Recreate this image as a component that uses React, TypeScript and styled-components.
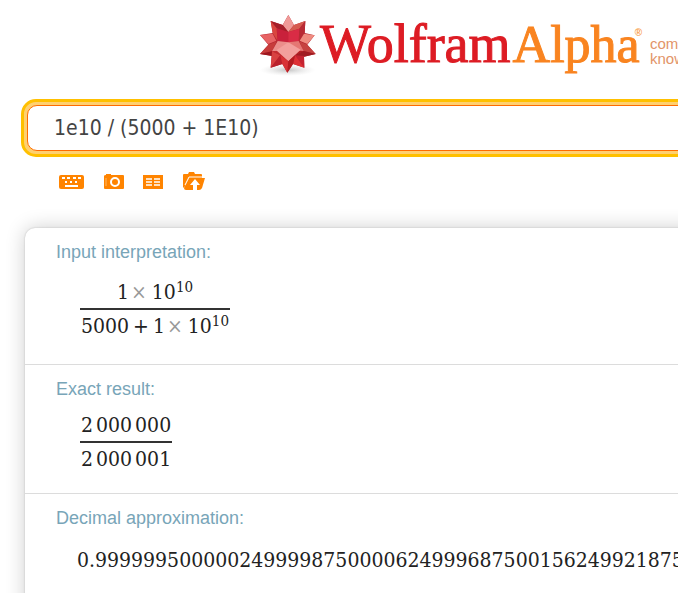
import React from "react";
import styled, { createGlobalStyle } from "styled-components";

const GlobalStyle = createGlobalStyle`
  *, *::before, *::after { box-sizing: border-box; }
  html, body { margin: 0; background: #fff; overflow: hidden; }
  body { font-family: "Liberation Sans", Arial, sans-serif; }
`;

const serifMath = `"DejaVu Serif Condensed", "DejaVu Serif", serif`;

const Page = styled.div`
  min-height: 100vh;
  overflow: hidden;
`;

const Header = styled.header`
  padding: 8px 0 0 256px;
`;

const Brand = styled.a`
  display: flex;
  align-items: flex-start;
  height: 91px;
  text-decoration: none;
  white-space: nowrap;
`;

const Star = styled.svg`
  flex: none;
  width: 64px;
  height: 72px;
`;

const Wordmark = styled.span`
  flex: none;
  width: 330px;
  font: 54px/72px "Liberation Serif", "Times New Roman", serif;
  color: #dd1c24;
  -webkit-text-stroke: 1px currentColor;
`;

const Alpha = styled.span`
  margin-left: 2px;
  font-size: 52px;
  color: #f98420;
`;

const Registered = styled.sup`
  margin-left: -5px;
  font: bold 10px/10px "Liberation Sans", Arial, sans-serif;
  vertical-align: 26px;
  color: #f9a04c;
  -webkit-text-stroke: 0;
`;

const Tagline = styled.span`
  flex: none;
  padding-top: 28px;
  font-size: 15px;
  line-height: 15px;
  color: #e29468;
`;

const SearchFrame = styled.form`
  margin: 0 -24px 0 21px;
  padding: 3px;
  border: 3px solid #ffc000;
  border-radius: 15px;
  background: #ffd070;
`;

const SearchInput = styled.input`
  display: block;
  width: 100%;
  height: 46px;
  padding: 0 26px;
  border: 1px solid #ff6c00;
  border-radius: 10px;
  outline: none;
  background: #fff;
  color: #444;
  font: 21px "DejaVu Sans Condensed", "DejaVu Sans", sans-serif;
`;

const Tools = styled.nav`
  display: flex;
  align-items: center;
  gap: 18px;
  height: 50px;
  padding-left: 58px;
`;

const ToolButton = styled.button`
  display: block;
  padding: 0;
  border: 0;
  background: none;
  color: #ff8400;
  svg { display: block; }
`;

const Results = styled.main`
  margin: 21px -24px 0 25px;
  padding-bottom: 24px;
  border-radius: 10px;
  background: #fff;
  box-shadow: 0 0 2px rgba(0, 0, 0, 0.2), 0 0 20px rgba(0, 0, 0, 0.2);
`;

const Pod = styled.section`
  padding: 13px 0 18px 31px;
  & + & { border-top: 1px solid #dcdcdc; }
`;

const PodTitle = styled.h2`
  margin: 0;
  font-size: 18px;
  font-weight: 400;
  line-height: 22px;
  color: #78a5b8;
`;

const Fraction = styled.div<{ $above: number; $below?: number }>`
  display: inline-flex;
  flex-direction: column;
  align-items: center;
  margin: ${(p) => p.$above}px 0 ${(p) => p.$below ?? 0}px 24px;
  color: #222;
  font: 21px/32px ${serifMath};
  white-space: nowrap;
`;

const Part = styled.div`
  padding: 0 1px;
  & + & {
    border-top: 2px solid #333;
  }
`;

const Times = styled.span`
  margin: 0 5px 0 2px;
  color: #999;
  font-size: 21px;
`;

const Power = styled.sup`
  font-size: 15px;
  line-height: 1px;
  vertical-align: 7px;
`;

const Group = styled.span`
  & + & { margin-left: 3px; }
`;

const Operator = styled.span`
  margin: 0 4px;
`;

const Decimal = styled.div`
  margin: 14px 0 0 21px;
  color: #222;
  font: 21px/34px ${serifMath};
  white-space: nowrap;
`;

const StarLogo = () => (
  <Star viewBox="18 9 192 216" aria-hidden="true">
    <defs>
      <radialGradient id="ground">
        <stop offset="0" stopColor="#aaa" stopOpacity=".7" />
        <stop offset="1" stopColor="#ddd" stopOpacity="0" />
      </radialGradient>
    </defs>
    <ellipse cx="113" cy="195" rx="84" ry="18" fill="url(#ground)" />
    <path d="M115 30 132 60 166 48 164 84 194 91 172 119 197 147 162 155 163 188 129 177 112 203 97 177 62 188 65 152 30 147 55 119 30 90 68 84 62 48 98 60Z" fill="#b52630" />
    <path d="M115 30 132 60 115 81 98 60Z" fill="#f09a98" />
    <path d="M62 48 98 60 115 81 80 70Z" fill="#a51f2a" />
    <path d="M62 48 80 70 83 108 68 84Z" fill="#d9463f" />
    <path d="M166 48 132 60 115 81 148 71Z" fill="#d65b50" />
    <path d="M166 48 148 71 146 108 164 84Z" fill="#b82b35" />
    <path d="M80 70 115 81 115 112 83 108Z" fill="#c9213b" />
    <path d="M148 71 115 81 115 112 146 108Z" fill="#d92c45" />
    <path d="M30 90 68 86 79 107 55 117Z" fill="#e76364" />
    <path d="M194 91 162 86 149 107 172 117Z" fill="#ef8c80" />
    <path d="M30 147 55 119 80 109 66 139Z" fill="#c73c3b" />
    <path d="M30 147 66 139 91 151 65 153Z" fill="#9e171e" />
    <path d="M197 147 172 119 148 109 161 138Z" fill="#c64340" />
    <path d="M197 147 161 138 135 151 162 155Z" fill="#a01c22" />
    <path d="M83 108 115 112 103 138 66 139Z" fill="#eb8e8b" />
    <path d="M146 108 115 112 127 138 161 138Z" fill="#e57773" />
    <path d="M66 139 103 136 111 167 91 151Z" fill="#c42c30" />
    <path d="M66 139 91 151 62 188Z" fill="#d84141" />
    <path d="M62 188 91 151 97 177Z" fill="#ba222d" />
    <path d="M161 138 127 136 116 167 135 151Z" fill="#b52024" />
    <path d="M163 188 135 151 162 153Z" fill="#c52331" />
    <path d="M163 188 135 151 129 177Z" fill="#de3035" />
    <path d="M115 112 152 134 115 169 79 136Z" fill="#f3a09d" />
    <path d="M91 151 115 169 112 203 97 177Z" fill="#d83236" />
    <path d="M135 151 115 169 112 203 129 177Z" fill="#b51b20" />
  </Star>
);

const KeyboardIcon = () => (
  <svg width="26" height="20" viewBox="0 0 26 20">
    <rect x="1" y="3" width="25" height="14" rx="2" fill="currentColor" />
    <path d="M4 6h3M9 6h3M15 6h3M20 6h3M7 10h2M12 10h2M17 10h2M7 14h13" stroke="#fff" strokeWidth="2" />
  </svg>
);

const CameraIcon = () => (
  <svg width="22" height="20" viewBox="0 0 22 20">
    <path d="M4 3V2h5v1h12q1 0 1 1v12q0 1-1 1H3q-1 0-1-1V4q0-1 2-1Z" fill="currentColor" />
    <circle cx="13" cy="10" r="4" fill="none" stroke="#fff" strokeWidth="2" />
    <path d="M4 6v8" stroke="#ffb764" />
  </svg>
);

const TableIcon = () => (
  <svg width="22" height="20" viewBox="0 0 22 20">
    <path d="M1 3h20v14H1Z" fill="currentColor" />
    <path d="M4 7h6M12 7h6M4 10h6M12 10h6M4 13h6M12 13h6" stroke="#fff" strokeWidth="1.5" />
  </svg>
);

const UploadIcon = () => (
  <svg width="24" height="22" viewBox="0 0 24 22">
    <path d="M1 16V4q0-1 1-1h4l1-2h5l1 2h6q1 0 1 1v3H7L2 17Z" fill="currentColor" />
    <path d="M7 7h16l-3 10q-1 2-3 2H4q-2 0-2-2Z" fill="currentColor" />
    <path d="M20 6H7L3 14" fill="none" stroke="#fff" />
    <path d="M13 8l5 6h-3v6h-4v-6H8Z" fill="#fff" />
  </svg>
);

const tools = [
  { label: "Extended keyboard", Icon: KeyboardIcon },
  { label: "Image input", Icon: CameraIcon },
  { label: "Data input", Icon: TableIcon },
  { label: "File upload", Icon: UploadIcon },
];

const Scientific = () => (
  <>
    1<Times>×</Times>10<Power>10</Power>
  </>
);

const Grouped = ({ groups }: { groups: string[] }) => (
  <>
    {groups.map((group, i) => (
      <Group key={i}>{group}</Group>
    ))}
  </>
);

export default function App() {
  return (
    <Page>
      <GlobalStyle />
      <Header>
        <Brand href="#">
          <StarLogo />
          <Wordmark>
            Wolfram<Alpha>Alpha</Alpha>
            <Registered>®</Registered>
          </Wordmark>
          <Tagline>
            computational
            <br />
            knowledge engine
          </Tagline>
        </Brand>
      </Header>
      <SearchFrame onSubmit={(e) => e.preventDefault()}>
        <SearchInput aria-label="Query" defaultValue="1e10 / (5000 + 1E10)" />
      </SearchFrame>
      <Tools>
        {tools.map(({ label, Icon }) => (
          <ToolButton key={label} type="button" aria-label={label}>
            <Icon />
          </ToolButton>
        ))}
      </Tools>
      <Results>
        <Pod>
          <PodTitle>Input interpretation:</PodTitle>
          <Fraction $above={13} $below={4}>
            <Part>
              <Scientific />
            </Part>
            <Part>
              5000<Operator>+</Operator>
              <Scientific />
            </Part>
          </Fraction>
        </Pod>
        <Pod>
          <PodTitle>Exact result:</PodTitle>
          <Fraction $above={9}>
            <Part>
              <Grouped groups={["2", "000", "000"]} />
            </Part>
            <Part>
              <Grouped groups={["2", "000", "001"]} />
            </Part>
          </Fraction>
        </Pod>
        <Pod>
          <PodTitle>Decimal approximation:</PodTitle>
          <Decimal>0.9999995000002499998750000624999687500156249921875</Decimal>
        </Pod>
      </Results>
    </Page>
  );
}
